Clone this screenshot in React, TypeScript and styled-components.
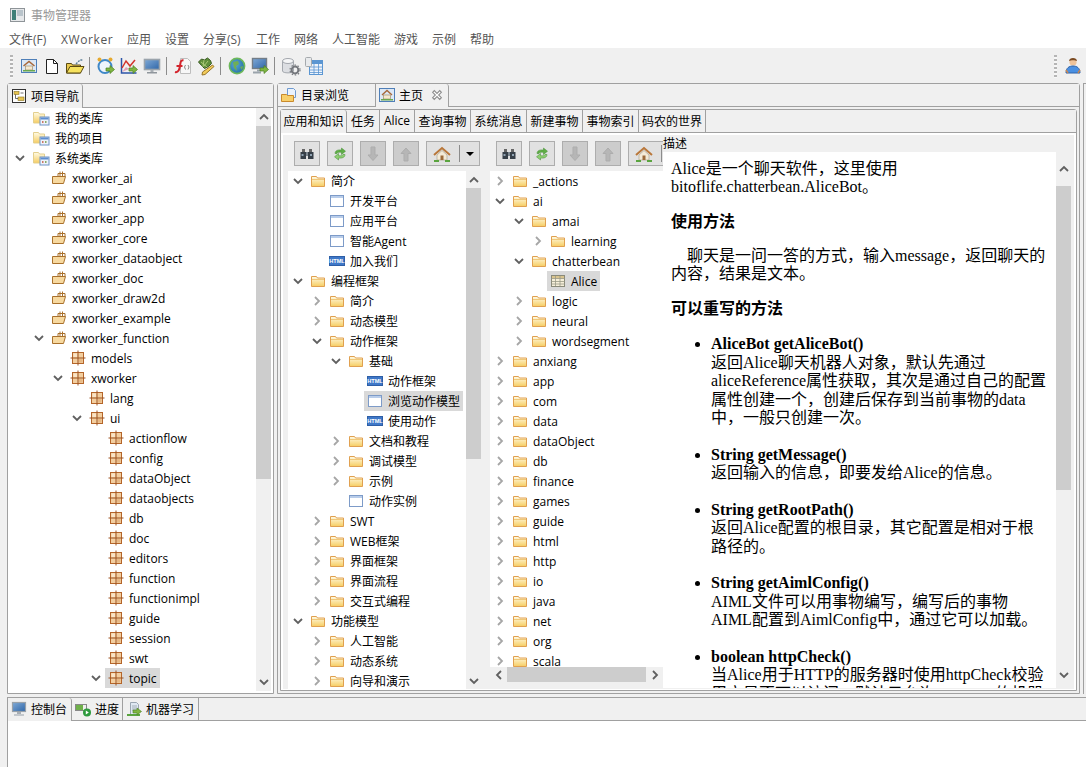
import React from "react";
import styled, { createGlobalStyle } from "styled-components";

const GlobalStyle = createGlobalStyle`
  html, body {
    margin: 0;
    padding: 0;
    background: #f0f0f0;
  }
  * {
    box-sizing: border-box;
  }
`;

const UI_FONT = `"Open Sans", "Noto Sans CJK SC", sans-serif`;
const DOC_FONT = `"Liberation Serif", "Noto Sans CJK SC", serif`;
const LINE = "#a0a0a0";

/* ---------- icons ---------- */

const Svg = ({ children, w = 16, h = 16 }: { children: React.ReactNode; w?: number; h?: number }) => (
  <svg width={w} height={h} viewBox={`0 0 ${w} ${h}`} style={{ flex: "none", display: "block" }}>
    {children}
  </svg>
);

const SharedDefs = () => (
  <svg width="0" height="0" style={{ position: "absolute" }}>
    <defs>
      <linearGradient id="folderFill" x1="0" y1="0" x2="0" y2="1">
        <stop offset="0" stopColor="#fffbe6" />
        <stop offset="1" stopColor="#f6cd62" />
      </linearGradient>
      <linearGradient id="screenFill" x1="0" y1="0" x2="1" y2="1">
        <stop offset="0" stopColor="#7fa9d6" />
        <stop offset="1" stopColor="#2f66a8" />
      </linearGradient>
      <radialGradient id="globeFill" cx="0.4" cy="0.4" r="0.7">
        <stop offset="0" stopColor="#5aa5d8" />
        <stop offset="1" stopColor="#1f6ea0" />
      </radialGradient>
    </defs>
  </svg>
);

const FolderIcon = () => (
  <Svg>
    <path d="M1.5 3.5h5l1 1.5h7v8.5h-13z" fill="url(#folderFill)" stroke="#e0a050" />
    <path d="M2 6.5h12" stroke="#f0c878" />
  </Svg>
);

const LibFolderIcon = () => (
  <Svg w={18}>
    <path d="M1.5 2.5h5l1 1.5h5v9h-11z" fill="url(#folderFill)" stroke="#e3cf8e" />
    <rect x="8" y="7" width="9" height="8" fill="#eef3fb" stroke="#6f93c6" />
    <rect x="8.5" y="7.5" width="8" height="2" fill="#5d8ed0" />
    <rect x="10" y="11" width="1.5" height="2" fill="#c76" />
    <rect x="13" y="11" width="1.5" height="2" fill="#8a6" />
  </Svg>
);

const JarIcon = () => (
  <Svg>
    <path d="M1.5 6.5h13l-2 7h-11z" fill="#f7d9a0" stroke="#a9702c" />
    <path d="M7 3.5h7v3M9 1.5v5M11.5 1.5v5M7 3.5v3" stroke="#a9702c" fill="none" />
  </Svg>
);

const PackageIcon = () => (
  <Svg>
    <rect x="2.5" y="2.5" width="11" height="11" fill="#f3cfa0" stroke="#b4652a" />
    <path d="M8 0.5v15M0.5 8h15" stroke="#9c5320" />
    <rect x="3.5" y="3.5" width="3.5" height="3.5" fill="#fae5c8" />
    <rect x="9" y="9" width="3.5" height="3.5" fill="#e7b985" />
  </Svg>
);

const PageIcon = () => (
  <Svg>
    <rect x="1.5" y="2.5" width="13" height="11" fill="#fff" stroke="#7d9bc8" />
    <rect x="2" y="3" width="12" height="2" fill="#b9cdea" />
  </Svg>
);

const HtmlIcon = () => (
  <Svg>
    <rect x="0.5" y="3.5" width="15" height="9" fill="#3f78c8" stroke="#2e5ea6" />
    <text x="8" y="10.2" textAnchor="middle" fontSize="5.6" fontWeight="700" fontFamily="Liberation Sans" fill="#fff">
      HTML
    </text>
  </Svg>
);

const TableIcon = () => (
  <Svg>
    <rect x="1.5" y="2.5" width="13" height="11" fill="#f6efd9" stroke="#8a8a7a" />
    <rect x="2" y="3" width="12" height="2.5" fill="#d9c48e" />
    <path d="M1.5 5.5h13M1.5 8.5h13M1.5 11h13M5.5 3v10M10 3v10" stroke="#9a9a88" strokeWidth="0.8" />
  </Svg>
);

const HomeFrameIcon = () => (
  <Svg>
    <rect x="0.5" y="1.5" width="15" height="13" fill="#dce8f6" stroke="#4f7fb8" />
    <path d="M3 8l5-4.5L13 8" fill="none" stroke="#a8683a" strokeWidth="1.4" />
    <rect x="4.5" y="8" width="7" height="4" fill="#f4e8cf" stroke="#97805a" strokeWidth="0.6" />
    <rect x="2" y="12" width="12" height="1.5" fill="#6aa84f" />
  </Svg>
);

const HomeIcon = () => (
  <Svg w={18}>
    <path d="M1 9l8-7 8 7" fill="none" stroke="#b9773a" strokeWidth="2" />
    <path d="M4 9l5-4.5L14 9v5H4z" fill="#f3ead7" stroke="#a69a80" strokeWidth="0.6" />
    <rect x="7.5" y="9.5" width="3" height="4.5" fill="#9c6a3a" />
    <path d="M1 15h5M12 15h5" stroke="#5aa43f" strokeWidth="2" />
  </Svg>
);

const BinocularsIcon = () => (
  <Svg>
    <path d="M3 6V3h3v3zM10 6V3h3v3z" fill="#666" />
    <rect x="1.5" y="6" width="5.5" height="7" fill="#363f48" />
    <rect x="9" y="6" width="5.5" height="7" fill="#363f48" />
    <rect x="7" y="6" width="2" height="4" fill="#7d8790" />
    <rect x="2.5" y="8" width="2" height="2" fill="#8fa2b1" />
    <rect x="11" y="8" width="2" height="2" fill="#8fa2b1" />
  </Svg>
);

const RefreshIcon = () => (
  <Svg>
    <path d="M3 7.5C3 4.5 6 3.5 9.5 4V2l4 3.2-4 3.3V6.3C7 6 5.5 6.3 5 7.5z" fill="#5fae45" stroke="#3e8a2e" strokeWidth="0.5" />
    <path d="M13 8.5c0 3-3 4-6.5 3.5v2l-4-3.2 4-3.3v2.2c2.5.3 4 0 4.5-1.2z" fill="#8fcf72" stroke="#3e8a2e" strokeWidth="0.5" />
  </Svg>
);

const BigArrowIcon = ({ up }: { up?: boolean }) => (
  <Svg>
    <path d={up ? "M8 2l5 5.5h-3V15H6V7.5H3z" : "M8 14.5L13 9h-3V1H6v8H3z"} fill="#b6b6b6" stroke="#adadad" />
  </Svg>
);

const ArrowBadge = () => <path d="M10 12h4v-2.5l4.5 4-4.5 4V15h-4z" fill="#7fb641" stroke="#4c7f22" strokeWidth="0.7" />;

const Tool = ({ children }: { children: React.ReactNode }) => (
  <svg width="20" height="20" viewBox="0 0 20 20" style={{ display: "block" }}>
    {children}
  </svg>
);

const ToolHome = () => (
  <Tool>
    <rect x="2.5" y="3.5" width="15" height="13" fill="#dce8f6" stroke="#4f7fb8" />
    <path d="M4.5 10l5.5-4.5 5.5 4.5" fill="none" stroke="#a8683a" strokeWidth="1.5" />
    <rect x="6.5" y="10" width="7" height="4" fill="#f4e8cf" stroke="#97805a" strokeWidth="0.6" />
    <rect x="4" y="14" width="12" height="1.5" fill="#6aa84f" />
  </Tool>
);
const ToolDoc = () => (
  <Tool>
    <path d="M4.5 3.5h7l4 4v10h-11z" fill="#fff" stroke="#222" />
    <path d="M11.5 3.5v4h4" fill="none" stroke="#222" />
  </Tool>
);
const ToolOpen = () => (
  <Tool>
    <path d="M1.5 7.5h5l1 1.5h8v8h-14z" fill="#e8c84e" stroke="#5a4a12" />
    <path d="M1.5 17l3.5-6.5h14l-3.5 6.5z" fill="#f6e25e" stroke="#5a4a12" />
    <path d="M11 8l4-4h3" fill="none" stroke="#5c7f98" strokeWidth="1.4" strokeDasharray="2 1" />
  </Tool>
);
const ToolClock = () => (
  <Tool>
    <circle cx="9" cy="10.5" r="6.5" fill="#eef4fb" stroke="#3f88c8" strokeWidth="2" />
    <circle cx="3.5" cy="3.5" r="2" fill="#e6a92e" />
    <circle cx="14.5" cy="3.5" r="2" fill="#e6a92e" />
    <ArrowBadge />
  </Tool>
);
const ToolChart = () => (
  <Tool>
    <path d="M2.5 2v15h15" fill="none" stroke="#2c55a8" strokeWidth="1.5" />
    <path d="M3 12l4-7 4 5 5-6" fill="none" stroke="#d3342c" strokeWidth="1.5" />
    <path d="M3 16l4-5 3 2" fill="#e3a0b8" />
    <ArrowBadge />
  </Tool>
);
const ToolMonitor = () => (
  <Tool>
    <rect x="2.5" y="3.5" width="15" height="10" fill="url(#screenFill)" stroke="#9aa3ab" strokeWidth="1.6" />
    <rect x="8.5" y="14" width="3" height="2" fill="#a8aeb4" />
    <rect x="5" y="16" width="10" height="1.5" fill="#8f969c" />
  </Tool>
);
const ToolFunc = () => (
  <Tool>
    <path d="M7.5 2.5h7l3 3v12h-10z" fill="#f7f7f7" stroke="#bdbdbd" />
    <path d="M10.5 4.5C7.5 3.5 7.5 7 7 10s-1.5 7-5 6M3.5 10h6" fill="none" stroke="#d3242c" strokeWidth="2" />
    <path d="M12.5 9l-1 2 1 2.5M15 9l1 2-1 2.5" fill="none" stroke="#888" />
  </Tool>
);
const ToolPlant = () => (
  <Tool>
    <path d="M2.5 6l3-3 3 1 3-2 3 2.5 1 3-3 3-4 2-3-3z" fill="#5f8f3a" stroke="#37591f" />
    <path d="M5 6l6 5M8 4l-1 7M12 5l-4 5" stroke="#aac876" />
    <path d="M16.5 9l1.5 1.5L9 18.5l-3 .5.5-3z" fill="#f2cb5a" stroke="#97752a" />
  </Tool>
);
const ToolGlobe = () => (
  <Tool>
    <circle cx="10" cy="10" r="7.6" fill="url(#globeFill)" stroke="#6db85a" strokeWidth="1.6" />
    <path d="M6 6l5-1 1 3-3 2 1 5-3-3z" fill="#6fae56" />
    <path d="M13 11l3-1-1 4z" fill="#6fae56" />
  </Tool>
);
const ToolMonitorArrow = () => (
  <Tool>
    <rect x="2.5" y="2.5" width="14" height="10" fill="url(#screenFill)" stroke="#737d87" strokeWidth="1.4" />
    <rect x="7" y="13.5" width="3" height="2" fill="#9aa3ab" />
    <rect x="3" y="15.5" width="8" height="2" fill="#9aa3ab" />
    <ArrowBadge />
  </Tool>
);
const ToolDb = () => (
  <Tool>
    <path d="M1.5 5v10c0 2.5 11 2.5 11 0V5" fill="#dcdee2" stroke="#a4a8ae" />
    <ellipse cx="7" cy="5" rx="5.5" ry="2.5" fill="#f5f6f7" stroke="#a4a8ae" />
    <circle cx="14" cy="14" r="3.4" fill="none" stroke="#74777c" strokeWidth="2" />
    <circle cx="14" cy="14" r="5" fill="none" stroke="#74777c" strokeWidth="1.2" strokeDasharray="1.5 1.7" />
  </Tool>
);
const ToolTable = () => (
  <Tool>
    <rect x="5.5" y="4.5" width="13" height="14" fill="#eef4fb" stroke="#5b96d2" />
    <rect x="6" y="5" width="12" height="3" fill="#5b96d2" />
    <path d="M5.5 11h13M5.5 14h13M5.5 16.5h13M10 8v10M14.5 8v10" stroke="#5b96d2" strokeWidth="0.8" />
    <rect x="1.5" y="1.5" width="6" height="9" rx="1" fill="#e8eaec" stroke="#a5a9ad" />
  </Tool>
);
const ToolPerson = () => (
  <Tool>
    <circle cx="10" cy="6" r="3.6" fill="#eec39a" />
    <path d="M6 5c0-4 8-4 8 0-2-1-6-1-8 0z" fill="#7a4a22" />
    <path d="M3 17c0-5 3-7 7-7s7 2 7 7z" fill="#4a90e2" stroke="#2e62a8" />
    <path d="M3 14l2 3M17 14l-2 3" stroke="#c98650" strokeWidth="1.5" />
  </Tool>
);
const ToolStack = () => (
  <Tool>
    <path d="M1 4h4M1 7h4M1 10h4" stroke="#c8790f" strokeWidth="2" />
  </Tool>
);

const TabProjectIcon = () => (
  <Svg>
    <rect x="1.5" y="1.5" width="13" height="13" fill="#fff" stroke="#333" />
    <rect x="3" y="3.5" width="5" height="3" fill="#e6c350" stroke="#8a7420" strokeWidth="0.6" />
    <rect x="7" y="9" width="6" height="3.5" fill="#e6c350" stroke="#8a7420" strokeWidth="0.6" />
    <path d="M4.5 6.5v4h2.5M9.5 5h3" fill="none" stroke="#333" strokeWidth="0.7" />
  </Svg>
);
const TabDirIcon = () => (
  <Svg>
    <path d="M6.5 1.5h6l2 2v7h-8z" fill="#eaf2fc" stroke="#6f9ad0" />
    <path d="M0.5 7.5h5l1 1h6v6h-12z" fill="#f8cf6a" stroke="#c98a2c" />
  </Svg>
);
const TabProgressIcon = () => (
  <Svg>
    <rect x="0.5" y="3.5" width="11" height="6" fill="#eef0ee" stroke="#888" />
    <rect x="1" y="4" width="7" height="5" fill="#6fb04a" />
    <circle cx="12" cy="11.5" r="4" fill="#2e9a3e" />
    <path d="M10.8 9.5l3 2-3 2z" fill="#fff" />
  </Svg>
);
const TabLearnIcon = () => (
  <Svg>
    <path d="M4.5 1.5h6l2 2v10h-8z" fill="#dfe8f2" stroke="#9aa6b2" />
    <path d="M6 5h5M6 7h5M6 9h5" stroke="#8a96a2" strokeWidth="0.7" />
    <path d="M1 14h13" stroke="#5aa43f" strokeWidth="2" />
    <path d="M7 9h4V7l4.5 3.5L11 14v-2H7z" fill="#7fb641" stroke="#4c7f22" strokeWidth="0.6" />
  </Svg>
);
const TabMonitorIcon = () => (
  <Svg>
    <rect x="1.5" y="1.5" width="13" height="9" fill="url(#screenFill)" stroke="#98a1a9" strokeWidth="1.2" />
    <rect x="6" y="11" width="4" height="2" fill="#a8aeb4" />
    <rect x="3" y="13" width="10" height="2" fill="#c3c8cd" />
  </Svg>
);

const CloseIcon = () => (
  <svg width="12" height="12" viewBox="0 0 11 11" style={{ display: "block", marginLeft: 4 }}>
    <path
      d="M1.5 3L3 1.5l2.5 2.5L8 1.5 9.5 3 7 5.5 9.5 8 8 9.5 5.5 7 3 9.5 1.5 8 4 5.5z"
      fill="#fff"
      stroke="#8c8c8c"
    />
  </svg>
);

const TitleAppIcon = () => (
  <svg width="15" height="14" viewBox="0 0 15 14" style={{ display: "block" }}>
    <rect x="0.5" y="0.5" width="14" height="13" fill="#e6e8ea" stroke="#8e9498" />
    <rect x="2" y="2" width="4" height="10" fill="#3f7f78" />
    <rect x="7" y="2" width="6" height="6" fill="#b9c4cb" />
  </svg>
);

const Chevron = ({ dir, light }: { dir: "down" | "right" | "up" | "left"; light?: boolean }) => {
  const points = {
    down: "2,4 6,8 10,4",
    up: "2,8 6,4 10,8",
    right: "4,2 8,6 4,10",
    left: "8,2 4,6 8,10",
  }[dir];
  return (
    <svg width="12" height="12" viewBox="0 0 12 12" style={{ display: "block" }}>
      <polyline points={points} fill="none" stroke={light ? "#a6a6a6" : "#606060"} strokeWidth="1.8" />
    </svg>
  );
};

/* ---------- page frame ---------- */

const Page = styled.div`
  width: 1086px;
  height: 767px;
  overflow: hidden;
  display: flex;
  flex-direction: column;
  background: #f0f0f0;
  font-family: ${UI_FONT};
  font-size: 12px;
  color: #000;
`;

const TitleBar = styled.div`
  height: 29px;
  background: #fff;
  display: flex;
  align-items: center;
  gap: 6px;
  padding-left: 10px;
  color: #999;
`;

const MenuBar = styled.div`
  height: 19px;
  background: #fff;
  display: flex;
  align-items: center;
  padding-left: 9px;
  padding-top: 1px;
  color: #555;
`;

const MenuItem = styled.span<{ $w: number; $wide?: boolean }>`
  width: ${(p) => p.$w}px;
  flex: none;
  letter-spacing: ${(p) => (p.$wide ? "0.6px" : "0")};
`;

const ToolBar = styled.div`
  height: 35px;
  display: flex;
  align-items: center;
  padding-left: 10px;
  padding-top: 1px;
`;

const Grip = styled.div`
  width: 3px;
  height: 23px;
  margin-right: 4px;
  background: repeating-linear-gradient(to bottom, #b5b5b5 0 2px, #f7f7f7 2px 4px);
`;

const ToolSlot = styled.div`
  width: 23px;
  height: 24px;
  display: flex;
  align-items: center;
  justify-content: center;
`;

const ToolSep = styled.div`
  width: 1px;
  height: 18px;
  margin: 0 4px 0 3px;
  background: #8c8c8c;
`;

const ToolRight = styled.div`
  margin-left: auto;
  margin-right: -21px;
  display: flex;
  align-items: center;
`;

const Main = styled.div`
  height: 611px;
  display: flex;
  padding-left: 7px;
  gap: 3px;
`;

const View = styled.div<{ $w: number }>`
  width: ${(p) => p.$w}px;
  flex: none;
  display: flex;
  flex-direction: column;
  border: 1px solid ${LINE};
  border-radius: 3px 3px 0 0;
`;

const TabStrip = styled.div<{ $h: number }>`
  height: ${(p) => p.$h}px;
  flex: none;
  display: flex;
  border-bottom: 1px solid ${LINE};
  background: #f0f0f0;
`;

const Tab = styled.div<{ $w: number; $active?: boolean }>`
  width: ${(p) => p.$w}px;
  flex: none;
  display: flex;
  align-items: center;
  gap: 4px;
  padding: 0 0 1px 3px;
  margin-bottom: ${(p) => (p.$active ? "-1px" : "0")};
  background: #f0f0f0;
  border-right: 1px solid ${LINE};
  border-radius: ${(p) => (p.$active ? "3px 3px 0 0" : "0")};
  white-space: nowrap;
`;

const TextTab = styled(Tab)`
  justify-content: center;
  padding-left: 0;
`;

const Collapsed = styled.div`
  flex: 1;
  border-left: 1px solid ${LINE};
  border-top: 1px solid ${LINE};
  margin-right: -4px;
`;

const NavBody = styled.div`
  flex: 1;
  min-height: 0;
  display: flex;
  background: #fff;
  padding: 0 2px 2px 0;
`;

const TreeClip = styled.div`
  flex: 1;
  min-width: 0;
  overflow: hidden;
  background: #fff;
`;

/* ---------- tree ---------- */

const Row = styled.div<{ $pad: number }>`
  height: 20px;
  display: flex;
  align-items: center;
  padding-left: ${(p) => p.$pad}px;
  white-space: nowrap;
`;

const Twist = styled.div`
  width: 12px;
  height: 12px;
  flex: none;
  margin-right: 3px;
`;

const Label = styled.div<{ $selected?: boolean }>`
  height: 20px;
  display: flex;
  align-items: center;
  gap: 5px;
  padding: 0 3px;
  background: ${(p) => (p.$selected ? "#d9d9d9" : "transparent")};
`;

type IconKind = "folder" | "lib" | "jar" | "pkg" | "page" | "html" | "table";

const ICONS: Record<IconKind, () => React.JSX.Element> = {
  folder: FolderIcon,
  lib: LibFolderIcon,
  jar: JarIcon,
  pkg: PackageIcon,
  page: PageIcon,
  html: HtmlIcon,
  table: TableIcon,
};

// [level, text, icon, twist: d=open r=closed, selected]
type Node = [number, string, IconKind, ("d" | "r" | "")?, boolean?];

const Tree = ({ nodes, base }: { nodes: Node[]; base: number }) => (
  <>
    {nodes.map(([level, text, kind, twist, selected], i) => {
      const Icon = ICONS[kind];
      return (
        <Row key={i} $pad={base + level * 19}>
          <Twist>{twist === "d" ? <Chevron dir="down" /> : twist === "r" ? <Chevron dir="right" light /> : null}</Twist>
          <Label $selected={selected}>
            <Icon />
            {text}
          </Label>
        </Row>
      );
    })}
  </>
);

const navNodes: Node[] = [
  [0, "我的类库", "lib"],
  [0, "我的项目", "lib"],
  [0, "系统类库", "lib", "d"],
  [1, "xworker_ai", "jar"],
  [1, "xworker_ant", "jar"],
  [1, "xworker_app", "jar"],
  [1, "xworker_core", "jar"],
  [1, "xworker_dataobject", "jar"],
  [1, "xworker_doc", "jar"],
  [1, "xworker_draw2d", "jar"],
  [1, "xworker_example", "jar"],
  [1, "xworker_function", "jar", "d"],
  [2, "models", "pkg"],
  [2, "xworker", "pkg", "d"],
  [3, "lang", "pkg"],
  [3, "ui", "pkg", "d"],
  [4, "actionflow", "pkg"],
  [4, "config", "pkg"],
  [4, "dataObject", "pkg"],
  [4, "dataobjects", "pkg"],
  [4, "db", "pkg"],
  [4, "doc", "pkg"],
  [4, "editors", "pkg"],
  [4, "function", "pkg"],
  [4, "functionimpl", "pkg"],
  [4, "guide", "pkg"],
  [4, "session", "pkg"],
  [4, "swt", "pkg"],
  [4, "topic", "pkg", "d", true],
];

const knowledgeNodes: Node[] = [
  [0, "简介", "folder", "d"],
  [1, "开发平台", "page"],
  [1, "应用平台", "page"],
  [1, "智能Agent", "page"],
  [1, "加入我们", "html"],
  [0, "编程框架", "folder", "d"],
  [1, "简介", "folder", "r"],
  [1, "动态模型", "folder", "r"],
  [1, "动作框架", "folder", "d"],
  [2, "基础", "folder", "d"],
  [3, "动作框架", "html"],
  [3, "浏览动作模型", "page", "", true],
  [3, "使用动作", "html"],
  [2, "文档和教程", "folder", "r"],
  [2, "调试模型", "folder", "r"],
  [2, "示例", "folder", "r"],
  [2, "动作实例", "page"],
  [1, "SWT", "folder", "r"],
  [1, "WEB框架", "folder", "r"],
  [1, "界面框架", "folder", "r"],
  [1, "界面流程", "folder", "r"],
  [1, "交互式编程", "folder", "r"],
  [0, "功能模型", "folder", "d"],
  [1, "人工智能", "folder", "r"],
  [1, "动态系统", "folder", "r"],
  [1, "向导和演示", "folder", "r"],
];

const fileNodes: Node[] = [
  [0, "_actions", "folder", "r"],
  [0, "ai", "folder", "d"],
  [1, "amai", "folder", "d"],
  [2, "learning", "folder", "r"],
  [1, "chatterbean", "folder", "d"],
  [2, "Alice", "table", "", true],
  [1, "logic", "folder", "r"],
  [1, "neural", "folder", "r"],
  [1, "wordsegment", "folder", "r"],
  ...[
    "anxiang",
    "app",
    "com",
    "data",
    "dataObject",
    "db",
    "finance",
    "games",
    "guide",
    "html",
    "http",
    "io",
    "java",
    "net",
    "org",
    "scala",
  ].map((name): Node => [0, name, "folder", "r"]),
];

/* ---------- scrollbars ---------- */

const VBar = styled.div`
  width: 15px;
  flex: none;
  display: flex;
  flex-direction: column;
  background: #f0f0f0;
`;

const BarEnd = styled.div<{ $h: number }>`
  height: ${(p) => p.$h}px;
  flex: none;
  display: flex;
  align-items: center;
  justify-content: center;
`;

const BarTrack = styled.div`
  flex: 1;
  min-height: 0;
`;

const BarThumb = styled.div<{ $h: number; $top?: number }>`
  height: ${(p) => p.$h}px;
  margin-top: ${(p) => p.$top ?? 0}px;
  background: #cdcdcd;
`;

const VScroll = ({ top, thumb, end = 18 }: { top?: number; thumb: number; end?: number }) => (
  <VBar>
    <BarEnd $h={end}>
      <Chevron dir="up" />
    </BarEnd>
    <BarTrack>
      <BarThumb $h={thumb} $top={top} />
    </BarTrack>
    <BarEnd $h={end}>
      <Chevron dir="down" />
    </BarEnd>
  </VBar>
);

const HBar = styled.div`
  height: 15px;
  flex: none;
  display: flex;
  align-items: center;
  background: #f0f0f0;
`;

const HArrow = styled.div`
  width: 17px;
  flex: none;
  display: flex;
  justify-content: center;
`;

const HThumb = styled.div`
  flex: 1;
  height: 15px;
  background: #cdcdcd;
`;

/* ---------- home tab ---------- */

const InnerFolder = styled.div`
  flex: 1;
  min-height: 0;
  display: flex;
  flex-direction: column;
  margin: 2px;
  border: 1px solid ${LINE};
  border-radius: 3px 3px 0 0;
  background: #fff;
`;

const Columns = styled.div`
  flex: 1;
  min-height: 0;
  margin: 2px 2px 1px 2px;
  padding: 6px 1px 0 5px;
  display: flex;
  background: #f0f0f0;
`;

const ToolColumn = styled.div<{ $w: number; $mr: number }>`
  width: ${(p) => p.$w}px;
  margin-right: ${(p) => p.$mr}px;
  flex: none;
  display: flex;
  flex-direction: column;
  min-height: 0;
  overflow: hidden;
`;

const Buttons = styled.div`
  height: 30px;
  flex: none;
  display: flex;
  gap: 7px;
  padding-left: 6px;
`;

const IconButton = styled.div<{ $off?: boolean; $w?: number }>`
  width: ${(p) => p.$w ?? 26}px;
  height: 25px;
  flex: none;
  display: flex;
  align-items: center;
  justify-content: center;
  border: 1px solid #adadad;
  background: ${(p) => (p.$off ? "#cccccc" : "#e1e1e1")};
`;

const Split = styled.div`
  width: 1px;
  height: 17px;
  margin: 0 6px 0 8px;
  background: #fff;
  border-left: 1px solid #8c8c8c;
`;

const DropMark = styled.div`
  width: 0;
  height: 0;
  border-left: 4px solid transparent;
  border-right: 4px solid transparent;
  border-top: 4px solid #000;
`;

const TreePane = styled.div`
  flex: 1;
  min-height: 0;
  display: flex;
  background: #fff;
`;

const ColumnEnd = styled.div<{ $h: number }>`
  height: ${(p) => p.$h}px;
  flex: none;
  background: #f0f0f0;
`;

const DocColumn = styled.div`
  flex: 1;
  min-width: 0;
  min-height: 0;
  display: flex;
  flex-direction: column;
`;

const DocCaption = styled.div`
  height: 14px;
  flex: none;
  margin-top: -5px;
  line-height: 16px;
`;

const DocBody = styled.div`
  flex: 1;
  min-height: 0;
  display: flex;
  margin-top: 2px;
  margin-bottom: 1px;
`;

const Doc = styled.div`
  width: 393px;
  flex: none;
  overflow: hidden;
  background: #fff;
  padding: 8px 0 0 8px;
  font-family: ${DOC_FONT};
  font-size: 16px;
  line-height: 18px;
  white-space: nowrap;
`;

const DocHead = styled.div`
  font-weight: 700;
  line-height: 20px;
  margin: 16px 0 15px;
`;

const DocIndent = styled.div`
  padding-left: 16px;
`;

const DocList = styled.ul`
  margin: 16px 0 0;
  padding: 0 0 0 40px;
  line-height: 18.5px;
`;

const DocItem = styled.li`
  margin-bottom: 18px;
  & > b {
    display: block;
  }
`;

const methods: { title: string; lines: string[] }[] = [
  {
    title: "AliceBot getAliceBot()",
    lines: [
      "返回Alice聊天机器人对象，默认先通过",
      "aliceReference属性获取，其次是通过自己的配置",
      "属性创建一个，创建后保存到当前事物的data",
      "中，一般只创建一次。",
    ],
  },
  { title: "String getMessage()", lines: ["返回输入的信息，即要发给Alice的信息。"] },
  { title: "String getRootPath()", lines: ["返回Alice配置的根目录，其它配置是相对于根", "路径的。"] },
  {
    title: "String getAimlConfig()",
    lines: ["AIML文件可以用事物编写，编写后的事物", "AIML配置到AimlConfig中，通过它可以加载。"],
  },
  {
    title: "boolean httpCheck()",
    lines: ["当Alice用于HTTP的服务器时使用httpCheck校验", "用户是否可以访问，默认只允许127.0.0.1的机器"],
  },
];

/* ---------- bottom ---------- */

const Bottom = styled.div`
  flex: 1;
  margin-top: 3px;
  margin-left: 7px;
  display: flex;
  flex-direction: column;
  border-top: 1px solid ${LINE};
  border-left: 1px solid ${LINE};
`;

const BottomBody = styled.div`
  flex: 1;
  background: #fff;
`;

const menus: [string, number, boolean?][] = [
  ["文件(F)", 52],
  ["XWorker", 66, true],
  ["应用", 38],
  ["设置", 38],
  ["分享(S)", 53],
  ["工作", 38],
  ["网络", 38],
  ["人工智能", 62],
  ["游戏", 38],
  ["示例", 38],
  ["帮助", 38],
];

const toolGroups = [
  [ToolHome, ToolDoc, ToolOpen],
  [ToolClock, ToolChart, ToolMonitor],
  [ToolFunc, ToolPlant],
  [ToolGlobe, ToolMonitorArrow],
  [ToolDb, ToolTable],
];

const innerTabs: [string, number][] = [
  ["任务", 33],
  ["Alice", 35],
  ["查询事物", 56],
  ["系统消息", 56],
  ["新建事物", 56],
  ["事物索引", 56],
  ["码农的世界", 67],
];

const ToolButtons = ({ wide }: { wide: number }) => (
  <Buttons>
    <IconButton>
      <BinocularsIcon />
    </IconButton>
    <IconButton>
      <RefreshIcon />
    </IconButton>
    <IconButton $off>
      <BigArrowIcon />
    </IconButton>
    <IconButton $off>
      <BigArrowIcon up />
    </IconButton>
    <IconButton $w={wide}>
      <HomeIcon />
      <Split />
      <DropMark />
    </IconButton>
  </Buttons>
);

export default function App() {
  return (
    <Page>
      <GlobalStyle />
      <SharedDefs />
      <TitleBar>
        <TitleAppIcon />
        事物管理器
      </TitleBar>
      <MenuBar>
        {menus.map(([m, w, wide]) => (
          <MenuItem key={m} $w={w} $wide={wide}>
            {m}
          </MenuItem>
        ))}
      </MenuBar>
      <ToolBar>
        <Grip />
        {toolGroups.map((group, g) => (
          <React.Fragment key={g}>
            {group.map((Icon, i) => (
              <ToolSlot key={i}>
                <Icon />
              </ToolSlot>
            ))}
            {g < toolGroups.length - 1 && <ToolSep />}
          </React.Fragment>
        ))}
        <ToolRight>
          <Grip />
          <ToolSlot>
            <ToolPerson />
          </ToolSlot>
          <ToolSlot>
            <ToolStack />
          </ToolSlot>
        </ToolRight>
      </ToolBar>

      <Main>
        <View $w={267}>
          <TabStrip $h={24}>
            <Tab $w={75} $active>
              <TabProjectIcon />
              项目导航
            </Tab>
          </TabStrip>
          <NavBody>
            <TreeClip>
              <Tree nodes={navNodes} base={6} />
            </TreeClip>
            <VScroll top={0} thumb={353} />
          </NavBody>
        </View>

        <View $w={803}>
          <TabStrip $h={23}>
            <Tab $w={98}>
              <TabDirIcon />
              目录浏览
            </Tab>
            <Tab $w={73} $active>
              <HomeFrameIcon />
              主页
              <CloseIcon />
            </Tab>
          </TabStrip>
          <InnerFolder>
            <TabStrip $h={23}>
              <TextTab $w={66} $active>
                应用和知识
              </TextTab>
              {innerTabs.map(([name, w]) => (
                <TextTab key={name} $w={w}>
                  {name}
                </TextTab>
              ))}
            </TabStrip>
            <Columns>
              <ToolColumn $w={193} $mr={9}>
                <ToolButtons wide={54} />
                <TreePane>
                  <TreeClip>
                    <Tree nodes={knowledgeNodes} base={4} />
                  </TreeClip>
                  <VScroll top={0} thumb={271} end={17} />
                </TreePane>
              </ToolColumn>
              <ToolColumn $w={173} $mr={0}>
                <ToolButtons wide={54} />
                <TreePane>
                  <TreeClip>
                    <Tree nodes={fileNodes} base={4} />
                  </TreeClip>
                </TreePane>
                <HBar>
                  <HArrow>
                    <Chevron dir="left" />
                  </HArrow>
                  <HThumb />
                  <HArrow>
                    <Chevron dir="right" />
                  </HArrow>
                </HBar>
                <ColumnEnd $h={7} />
              </ToolColumn>
              <DocColumn>
                <DocCaption>描述</DocCaption>
                <DocBody>
                  <Doc>
                    Alice是一个聊天软件，这里使用
                    <br />
                    bitoflife.chatterbean.AliceBot。
                    <DocHead>使用方法</DocHead>
                    <DocIndent>聊天是一问一答的方式，输入message，返回聊天的</DocIndent>
                    内容，结果是文本。
                    <DocHead>可以重写的方法</DocHead>
                    <DocList>
                      {methods.map((m) => (
                        <DocItem key={m.title}>
                          <b>{m.title}</b>
                          {m.lines.map((line) => (
                            <div key={line}>{line}</div>
                          ))}
                        </DocItem>
                      ))}
                    </DocList>
                  </Doc>
                  <VBar>
                    <BarEnd $h={34}>
                      <Chevron dir="up" />
                    </BarEnd>
                    <BarTrack>
                      <BarThumb $h={304} />
                    </BarTrack>
                    <BarEnd $h={26}>
                      <Chevron dir="down" />
                    </BarEnd>
                  </VBar>
                </DocBody>
              </DocColumn>
            </Columns>
          </InnerFolder>
        </View>
        <Collapsed />
      </Main>

      <Bottom>
        <TabStrip $h={23}>
          <Tab $w={64} $active>
            <TabMonitorIcon />
            控制台
          </Tab>
          <Tab $w={51}>
            <TabProgressIcon />
            进度
          </Tab>
          <Tab $w={76}>
            <TabLearnIcon />
            机器学习
          </Tab>
        </TabStrip>
        <BottomBody />
      </Bottom>
    </Page>
  );
}
